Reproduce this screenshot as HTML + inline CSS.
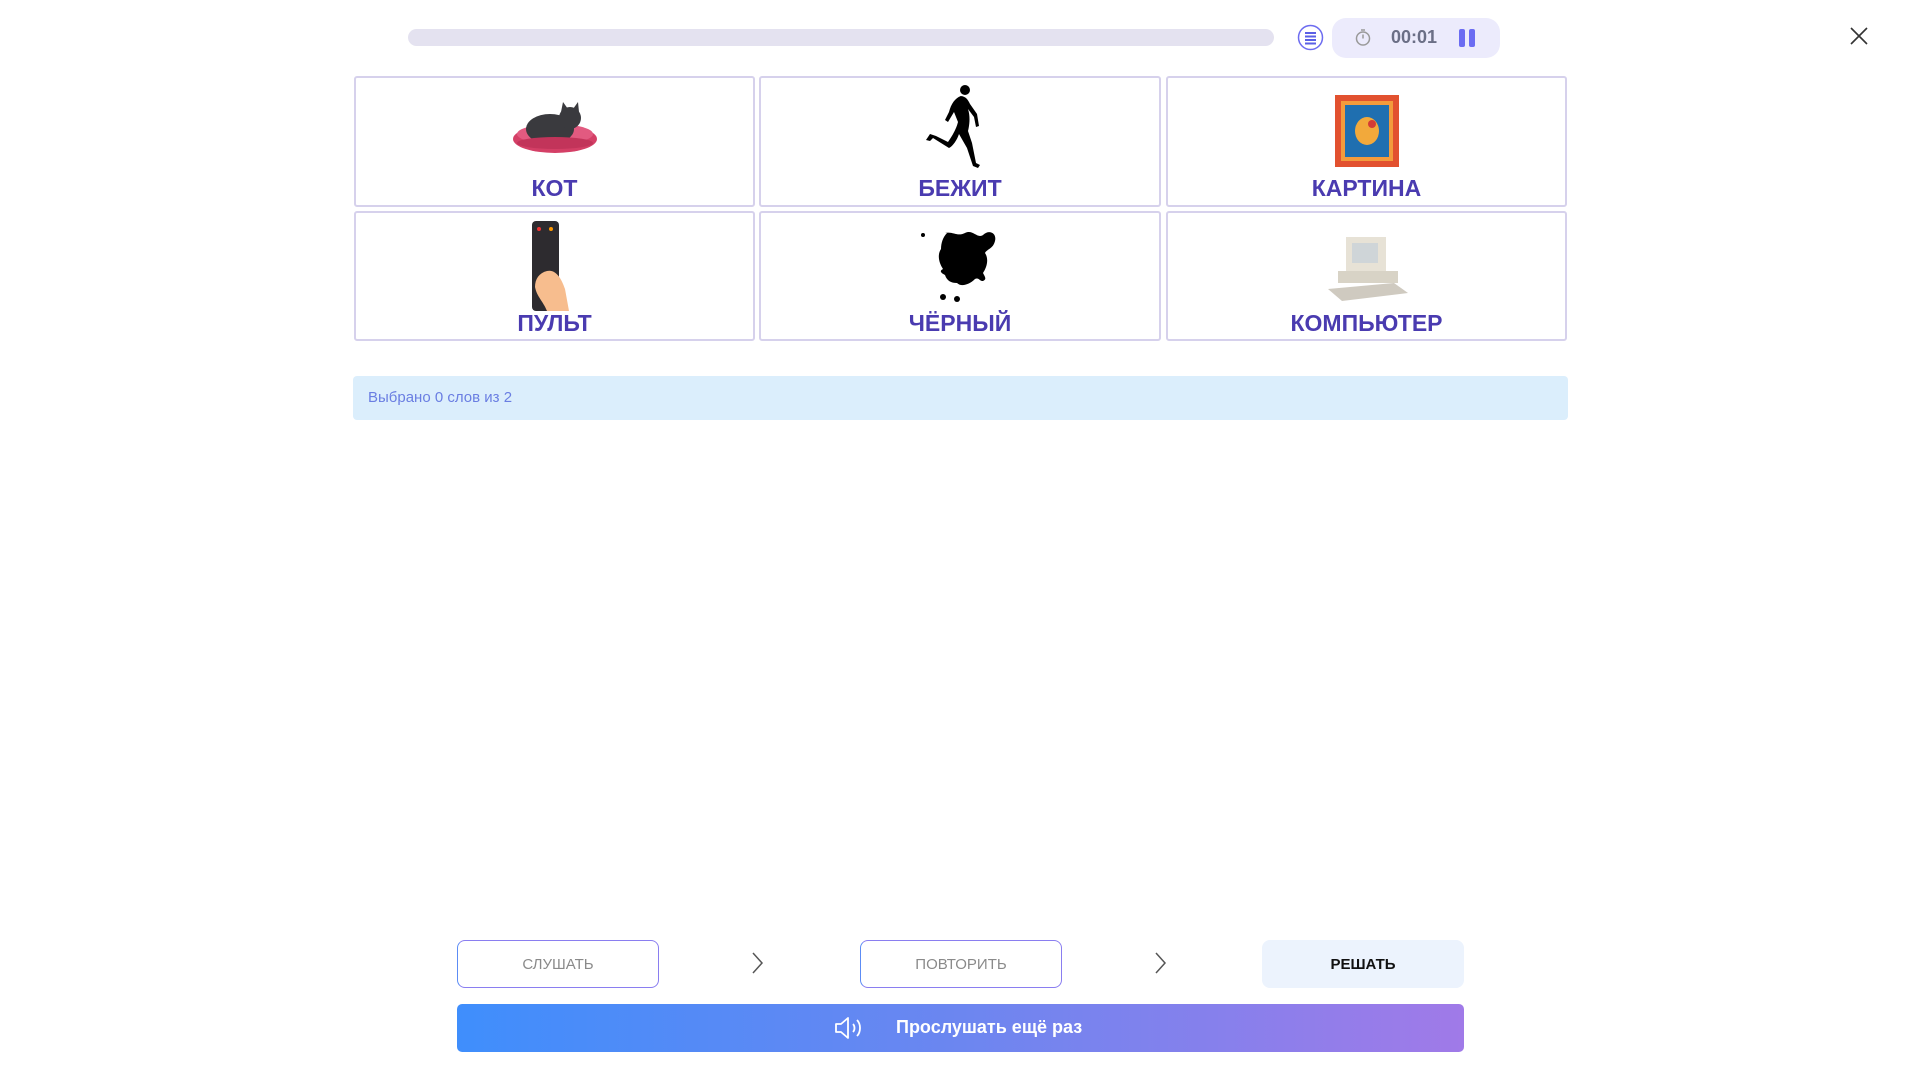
<!DOCTYPE html>
<html><head><meta charset="utf-8"><style>
*{margin:0;padding:0;box-sizing:border-box}
body{width:1920px;height:1080px;background:#fff;position:relative;overflow:hidden;font-family:"Liberation Sans","DejaVu Sans",sans-serif}
.abs{position:absolute}
.card{position:absolute;border:2px solid #d6d1ec;border-radius:3px;background:#fff}
.card .lbl{position:absolute;left:0;right:0;text-align:center;font-weight:bold;font-size:23px;color:#4a3bb0;top:97px}
.card svg{position:absolute;left:50%;transform:translateX(-50%)}
.btn{position:absolute;top:940px;height:48px;width:202px;border-radius:8px;display:flex;align-items:center;justify-content:center;font-size:15px;color:#8a8a8a}
.ob{border:1.5px solid #8a7ef0;border-left-color:#5c8cf5;}
</style></head><body>
<div class="abs" style="left:408px;top:29px;width:866px;height:17px;border-radius:9px;background:#e4e2f0"></div>
<svg class="abs" style="left:1297px;top:24px" width="27" height="27" viewBox="0 0 27 27"><circle cx="13.5" cy="13.5" r="12" fill="none" stroke="#6d6cf0" stroke-width="1.5"/><g stroke="#5a5fe6" stroke-width="2"><line x1="8" y1="9" x2="19" y2="9"/><line x1="8" y1="12.5" x2="19" y2="12.5"/><line x1="8" y1="16" x2="19" y2="16"/><line x1="8" y1="19.5" x2="19" y2="19.5"/></g></svg>
<div class="abs" style="left:1332px;top:18px;width:168px;height:40px;border-radius:14px;background:#ecebfc"></div>
<svg class="abs" style="left:1354px;top:27px" width="18" height="20" viewBox="0 0 18 20"><circle cx="9" cy="11.5" r="6.5" fill="none" stroke="#999" stroke-width="1.5"/><line x1="9" y1="11.5" x2="9" y2="7.5" stroke="#999" stroke-width="1.5"/><line x1="7" y1="3" x2="11" y2="3" stroke="#999" stroke-width="1.5"/></svg>
<div class="abs" style="left:1391px;top:27px;font-size:18px;font-weight:bold;color:#6b6f86">00:01</div>
<div class="abs" style="left:1459px;top:29px;width:6px;height:18px;border-radius:2px;background:#6b6cf2"></div>
<div class="abs" style="left:1469px;top:29px;width:6px;height:18px;border-radius:2px;background:#6b6cf2"></div>
<svg class="abs" style="left:1850px;top:27px" width="18" height="18" viewBox="0 0 18 18"><path d="M1 1L17 17M17 1L1 17" stroke="#333" stroke-width="1.6"/></svg>

<div class="card" style="left:354px;top:76px;width:401px;height:131px">
<svg style="top:16px" width="90" height="70" viewBox="0 0 90 70"><ellipse cx="45" cy="45" rx="42" ry="14" fill="#d43f66"/><ellipse cx="45" cy="40" rx="38" ry="10" fill="#e25a80"/><ellipse cx="40" cy="35" rx="24" ry="15" fill="#3a3a3e"/><circle cx="60" cy="24" r="11" fill="#3a3a3e"/><path d="M51 18L53 8L58 15ZM63 15L68 8L69 18Z" fill="#3a3a3e"/><ellipse cx="45" cy="49" rx="38" ry="6" fill="#c2345a"/></svg>
<div class="lbl">КОТ</div></div>
<div class="card" style="left:759px;top:76px;width:402px;height:131px">
<svg style="top:6px" width="90" height="92" viewBox="0 0 90 92"><circle cx="50" cy="6" r="5" fill="#000"/><path d="M46 12c-6 2-10 8-12 16l-4 8 3 2 6-10 4 10c-2 8-6 14-10 20l-12-6-6-2-4 6 4 1 3-3 16 10c4-2 8-8 10-14l8 14 6 18 5 2 2-3-4-2-4-20-4-12c2-8 2-16 0-22l6 8 2 10 3-1-2-12-7-10c-2-4-4-8-10-8z" fill="#000"/></svg>
<div class="lbl">БЕЖИТ</div></div>
<div class="card" style="left:1166px;top:76px;width:401px;height:131px">
<svg style="top:16px" width="66" height="74" viewBox="0 0 66 74"><rect x="1" y="1" width="64" height="72" fill="#e2512f"/><rect x="7" y="7" width="52" height="60" fill="#f39b3c"/><rect x="11" y="11" width="44" height="52" fill="#1f6fb0"/><ellipse cx="33" cy="37" rx="12" ry="14" fill="#f2a93b"/><circle cx="38" cy="30" r="4" fill="#d43b35"/></svg>
<div class="lbl">КАРТИНА</div></div>
<div class="card" style="left:354px;top:211px;width:401px;height:130px">
<svg style="top:6px" width="60" height="92" viewBox="0 0 60 92"><rect x="7" y="2" width="27" height="90" rx="4" fill="#2d2b2f"/><circle cx="14" cy="10" r="2" fill="#e33"/><circle cx="26" cy="10" r="2" fill="#f90"/><path d="M22 52c8-2 14 6 18 18l4 22H22c-4-10-10-14-12-24 0-8 4-14 12-16z" fill="#f7bd8e"/></svg>
<div class="lbl">ПУЛЬТ</div></div>
<div class="card" style="left:759px;top:211px;width:402px;height:130px">
<svg style="top:12px" width="90" height="82" viewBox="0 0 90 82"><path d="M30 8c8-2 12 4 20 0 8-4 12 6 18 2 6-6 14-2 12 6s-8 8-10 12c4 6 2 14-2 20 2 4 4 6 0 8-4 0-4-4-8-2-6 6-14 8-18 4-6 0-10-2-12-8-4-2-6-4-2-6-4-6-6-14-2-20 0-6 2-12 6-16z" fill="#000"/><circle cx="28" cy="72" r="3" fill="#000"/><circle cx="42" cy="74" r="3" fill="#000"/><circle cx="8" cy="10" r="2" fill="#000"/></svg>
<div class="lbl">ЧЁРНЫЙ</div></div>
<div class="card" style="left:1166px;top:211px;width:401px;height:130px">
<svg style="top:14px" width="86" height="76" viewBox="0 0 86 76"><rect x="22" y="10" width="40" height="34" fill="#e7e2d6"/><rect x="28" y="16" width="26" height="20" fill="#cfd5d8"/><rect x="14" y="44" width="60" height="12" fill="#d8d3c6"/><path d="M4 62L70 56L84 66L18 74Z" fill="#cfcac0"/></svg>
<div class="lbl">КОМПЬЮТЕР</div></div>

<div class="abs" style="left:353px;top:376px;width:1215px;height:44px;border-radius:4px;background:#dbeefc"></div>
<div class="abs" style="left:368px;top:389px;font-size:15px;color:#6a7ee2">Выбрано 0 слов из 2</div>

<div class="btn ob" style="left:457px">СЛУШАТЬ</div>
<svg class="abs" style="left:750px;top:951px" width="16" height="24" viewBox="0 0 16 24"><path d="M3 2l9 10-9 10" fill="none" stroke="#555" stroke-width="1.5"/></svg>
<div class="btn ob" style="left:860px">ПОВТОРИТЬ</div>
<svg class="abs" style="left:1153px;top:951px" width="16" height="24" viewBox="0 0 16 24"><path d="M3 2l9 10-9 10" fill="none" stroke="#555" stroke-width="1.5"/></svg>
<div class="btn" style="left:1262px;background:#ecf3fd;color:#111;font-weight:bold">РЕШАТЬ</div>

<div class="abs" style="left:457px;top:1004px;width:1007px;height:48px;border-radius:5px;background:linear-gradient(90deg,#3f8efc,#6c86f0 50%,#a07ae8)"></div>
<svg class="abs" style="left:834px;top:1016px" width="32" height="24" viewBox="0 0 32 24"><path d="M2 8h5l7-6v20l-7-6H2z" fill="none" stroke="#fff" stroke-width="1.8" stroke-linejoin="round"/><path d="M19 8c2 2 2 6 0 8M23 4c4 4 4 12 0 16" fill="none" stroke="#fff" stroke-width="1.8"/></svg>
<div class="abs" style="left:896px;top:1017px;font-size:18px;font-weight:bold;color:#fff">Прослушать ещё раз</div>
</body></html>
